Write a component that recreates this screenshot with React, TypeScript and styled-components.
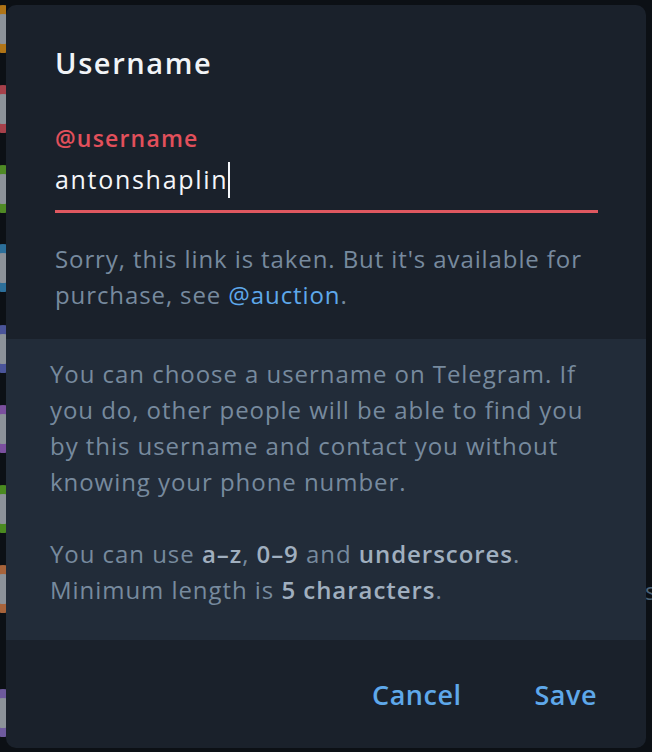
import React from "react";
import styled, { createGlobalStyle } from "styled-components";

const Global = createGlobalStyle`
  html, body { margin: 0; padding: 0; background: #0c1015; }
  body { font-family: "Open Sans", "Noto Sans", sans-serif; }
  * { box-sizing: border-box; }
`;

const Page = styled.div`
  position: relative;
  width: 652px;
  height: 752px;
  overflow: hidden;
  background: #0c1015;
  display: flex;
`;

const AvatarColumn = styled.div`
  width: 6px;
  overflow: hidden;
  display: flex;
  flex-direction: column;
`;

const Avatar = styled.div<{ $color: string; $top: number }>`
  flex: none;
  width: 48px;
  height: 48px;
  margin-left: -21px;
  margin-top: ${(p) => p.$top}px;
  border-radius: 50%;
  background: ${(p) => p.$color};
  display: flex;
  align-items: center;
  justify-content: center;
  &::after {
    content: "";
    width: 30px;
    height: 30px;
    border-radius: 50%;
    background: #8c9299;
  }
`;

const ChatArea = styled.div`
  flex: 1;
`;

const RightColumn = styled.div`
  width: 6px;
  overflow: hidden;
  padding-top: 574px;
  font-size: 24px;
  color: #4b6276;
  white-space: nowrap;
`;

const RightText = styled.div`
  margin-left: -1px;
`;

const Dialog = styled.div`
  position: absolute;
  left: 6px;
  top: 5px;
  width: 640px;
  height: 743px;
  border-radius: 10px;
  overflow: hidden;
  background: #1a212b;
  display: flex;
  flex-direction: column;
`;

const Header = styled.div`
  padding: 39px 48px 26px 49px;
  display: flex;
  flex-direction: column;
`;

const Title = styled.div`
  font-size: 29px;
  line-height: 38px;
  font-weight: 600;
  letter-spacing: 1.6px;
  color: #f1f4f7;
`;

const FieldLabel = styled.div`
  margin-top: 41px;
  font-size: 23px;
  line-height: 30px;
  font-weight: 600;
  letter-spacing: 1.2px;
  color: #e2505b;
`;

const Field = styled.div`
  margin-top: 10px;
  height: 50px;
  border-bottom: 3px solid #df5860;
  display: flex;
  align-items: flex-start;
`;

const FieldValue = styled.div`
  font-size: 25px;
  line-height: 32px;
  letter-spacing: 1.7px;
  color: #f4f6f9;
`;

const Caret = styled.span`
  display: inline-block;
  width: 1.5px;
  height: 36px;
  margin-top: -1px;
  background: #f4f6f9;
  vertical-align: top;
`;

const Note = styled.p`
  margin: 28px 0 0;
  font-size: 24px;
  line-height: 36px;
  letter-spacing: 0.9px;
  color: #778a9e;
`;

const Link = styled.a`
  color: #5ea8ea;
  text-decoration: none;
`;

const Info = styled.div`
  background: #222c39;
  padding: 17px 40px 0 44px;
  height: 301px;
`;

const InfoPara = styled.p`
  margin: 0 0 36px;
  font-size: 24px;
  line-height: 36px;
  letter-spacing: 0.95px;
  color: #778a9e;
`;

const Strong = styled.b`
  font-weight: 600;
  color: #a0afbf;
`;

const Footer = styled.div`
  flex: 1;
  display: flex;
  align-items: center;
  justify-content: flex-end;
  gap: 45px;
  padding-right: 35px;
`;

const TextButton = styled.button`
  background: none;
  border: none;
  padding: 0 14px;
  font-family: inherit;
  font-size: 27px;
  font-weight: 600;
  letter-spacing: 0.5px;
  color: #5ea8ea;
  cursor: pointer;
`;

const avatars: { color: string; top: number }[] = [
  { color: "#b07416", top: 5 },
  { color: "#a6404a", top: 32 },
  { color: "#4f8a25", top: 32 },
  { color: "#2c6f9a", top: 31 },
  { color: "#4a5499", top: 33 },
  { color: "#7b4f9e", top: 32 },
  { color: "#4a8a20", top: 32 },
  { color: "#a7633a", top: 32 },
  { color: "#6e5a9e", top: 76 },
];

export default function App() {
  return (
    <Page>
      <Global />
      <AvatarColumn>
        {avatars.map((a, i) => (
          <Avatar key={i} $color={a.color} $top={a.top} />
        ))}
      </AvatarColumn>
      <ChatArea />
      <RightColumn>
        <RightText>s</RightText>
      </RightColumn>
      <Dialog>
        <Header>
          <Title>Username</Title>
          <FieldLabel>@username</FieldLabel>
          <Field>
            <FieldValue>
              antonshaplin
              <Caret />
            </FieldValue>
          </Field>
          <Note>
            Sorry, this link is taken. But it's available for purchase, see{" "}
            <Link>@auction</Link>.
          </Note>
        </Header>
        <Info>
          <InfoPara>
            You can choose a username on Telegram. If you do, other people will
            be able to find you by this username and contact you without knowing
            your phone number.
          </InfoPara>
          <InfoPara>
            You can use <Strong>a–z</Strong>, <Strong>0–9</Strong> and{" "}
            <Strong>underscores</Strong>. Minimum length is{" "}
            <Strong>5 characters</Strong>.
          </InfoPara>
        </Info>
        <Footer>
          <TextButton>Cancel</TextButton>
          <TextButton>Save</TextButton>
        </Footer>
      </Dialog>
    </Page>
  );
}
